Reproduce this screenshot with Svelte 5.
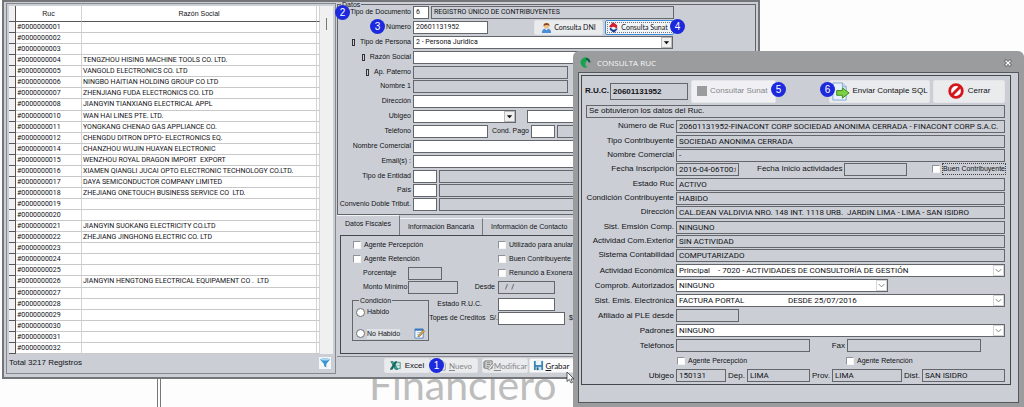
<script lang="ts">
	const providers = [
		['#0000000001', ''],
		['#0000000002', ''],
		['#0000000003', ''],
		['#0000000004', 'TENGZHOU HISING MACHINE TOOLS CO. LTD.'],
		['#0000000005', 'VANGOLD ELECTRONICS CO. LTD'],
		['#0000000006', 'NINGBO HAITIAN HOLDING GROUP CO LTD'],
		['#0000000007', 'ZHENJIANG FUDA ELECTRONICS CO. LTD'],
		['#0000000008', 'JIANGYIN TIANXIANG ELECTRICAL APPL'],
		['#0000000010', 'WAN HAI LINES PTE. LTD.'],
		['#0000000011', 'YONGKANG CHENAO GAS APPLIANCE CO.'],
		['#0000000012', 'CHENGDU DITRON DPTO- ELECTRONICS EQ.'],
		['#0000000014', 'CHANZHOU WUJIN HUAYAN ELECTRONIC'],
		['#0000000015', 'WENZHOU ROYAL DRAGON IMPORT  EXPORT'],
		['#0000000016', 'XIAMEN QIANGLI JUCAI OPTO ELECTRONIC TECHNOLOGY CO.LTD.'],
		['#0000000017', 'DAYA SEMICONDUCTOR COMPANY LIMITED'],
		['#0000000018', 'ZHEJIANG ONETOUCH BUSINESS SERVICE CO  LTD.'],
		['#0000000019', ''],
		['#0000000020', ''],
		['#0000000021', 'JIANGYIN SUOKANG ELECTRICITY CO.LTD'],
		['#0000000022', 'ZHEJIANG JINGHONG ELECTRIC CO. LTD'],
		['#0000000023', ''],
		['#0000000024', ''],
		['#0000000025', ''],
		['#0000000026', 'JIANGYIN HENGTONG ELECTRICAL EQUIPAMENT CO .  LTD'],
		['#0000000027', ''],
		['#0000000028', ''],
		['#0000000029', ''],
		['#0000000030', ''],
		['#0000000031', ''],
		['#0000000032', '']
	];

	const steps = [
		{ n: 1, x: 429, y: 358 },
		{ n: 2, x: 335, y: 5 },
		{ n: 3, x: 370, y: 19 },
		{ n: 4, x: 670, y: 19 },
		{ n: 5, x: 771, y: 82 },
		{ n: 6, x: 820, y: 82 }
	];

	// option text collapses plain spaces
	const nb = '\u00a0';
	const activity = `Principal${nb.repeat(4)}- 7020 - ACTIVIDADES DE CONSULTORÍA DE GESTIÓN`;
	const emission = `FACTURA PORTAL${nb.repeat(22)}DESDE 25/07/2016`;

	const tabs = ['Datos Fiscales', 'Información Bancaria', 'Información de Contacto'];
	let activeTab = $state(0);
	let condition = $state('');
</script>

{#snippet dropArrow()}
	<span class="drop"><svg viewBox="0 0 10 10"><path d="M2 3.5h6L5 7z" fill="#111" /></svg></span>
{/snippet}

{#snippet chevron()}
	<span class="drop light"><svg viewBox="0 0 10 10"><path d="M2 3.5l3 3 3-3" fill="none" stroke="#777" /></svg></span>
{/snippet}

{#snippet readonlyRow(id: string, label: string, value: string)}
	<div class="row">
		<label for={id}>{label}</label>
		<input {id} class="grow" readonly {value} />
	</div>
{/snippet}

{#snippet selectRow(id: string, label: string, value: string, short: boolean)}
	<div class="row tall">
		<label for={id}>{label}</label>
		<span class="select" class:grow={!short} class:w212={short}>
			<select {id}><option>{value}</option></select>
			{@render chevron()}
		</span>
	</div>
{/snippet}

<div class="desktop">
	<div class="backdrop"><span>Financiero</span></div>

	<main class="window">
		<section class="list">
			<div class="grid">
				<table>
					<thead>
						<tr><th class="sel"></th><th class="ruc">Ruc</th><th>Razón Social</th><th class="end"></th></tr>
					</thead>
					<tbody>
						{#each providers as [ruc, name]}
							<tr><td class="sel"></td><td>{ruc}</td><td>{name}</td><td></td></tr>
						{/each}
					</tbody>
				</table>
				<div class="scroll"><i></i></div>
			</div>
			<footer>
				<span>Total 3217 Registros</span>
				<button class="filter" aria-label="Filtrar">
					<svg viewBox="0 0 12 12">
						<path d="M1 2.5C1 1 11 1 11 2.5L7.300 7v3.500L5 9V7z" fill="#3b93cf" />
						<ellipse cx="6" cy="2.500" rx="4.200" ry="1" fill="#a9dbf5" />
					</svg>
				</button>
			</footer>
		</section>

		<section class="editor">
			<fieldset class="datos">
				<legend>Datos</legend>
				<div class="row">
					<label for="tdoc">Tipo de Documento</label>
					<input id="tdoc" class="w16" value="6" />
					<input class="ro w243" aria-label="Documento" readonly value="REGISTRO ÚNICO DE CONTRIBUYENTES" />
				</div>
				<div class="row">
					<label for="num">Número</label>
					<input id="num" class="w75" value="20601131952" />
					<button class="btn dni">
						<svg viewBox="0 0 12 12">
							<path d="M1 12c0-4 2-5 5-5s5 1 5 5z" fill="#4a8fd8" />
							<path d="M4 7l2 2 2-2z" fill="#fff" />
							<circle cx="6" cy="4.200" r="3" fill="#f3c08c" />
							<path d="M2.800 4.500C2 0 10 0 9.200 4.500 8 3 5 3 2.800 4.500z" fill="#8a4a1c" />
						</svg>
						Consulta DNI
					</button>
					<button class="btn sunat">
						<svg viewBox="0 0 12 12">
							<path d="M5.500 0L10 3.500v3L8.500 7.500C8.500 5 5.500 4.500 3.500 6L1 5z" fill="#d3202e" />
							<path d="M6.500 12L2 8.500v-2L3.500 6C3.500 8.500 6.500 9 8.500 7.500L11 7z" fill="#1d3f94" />
						</svg>
						Consulta Sunat
					</button>
				</div>
				<div class="row">
					<label for="tper"><i class="mark"></i>Tipo de Persona</label>
					<span class="select w260">
						<select id="tper"><option>2 - Persona Juridica</option></select>
						{@render dropArrow()}
					</span>
				</div>
				<div class="row">
					<label for="razon"><i class="mark"></i>Razón Social</label>
					<input id="razon" class="grow" />
				</div>
				<div class="row">
					<label for="pat"><i class="mark"></i>Ap. Paterno</label>
					<input id="pat" class="ro w155" readonly />
				</div>
				<div class="row tight">
					<label for="nom1">Nombre 1</label>
					<input id="nom1" class="ro w155" readonly />
				</div>
				<div class="row">
					<label for="dir">Dirección</label>
					<input id="dir" class="grow" />
				</div>
				<div class="row">
					<label for="ubi">Ubigeo</label>
					<span class="select w103">
						<select id="ubi"><option></option></select>
						{@render dropArrow()}
					</span>
					<input class="grow after" aria-label="Distrito" />
				</div>
				<div class="row">
					<label for="tel">Teléfono</label>
					<input id="tel" class="w75" />
					<label class="inline" for="pago">Cond. Pago</label>
					<input id="pago" class="w24" />
					<input class="ro grow" aria-label="Condición" readonly />
				</div>
				<div class="row">
					<label for="ncom">Nombre Comercial</label>
					<input id="ncom" class="grow" />
				</div>
				<div class="row">
					<label for="mail">Email(s) :</label>
					<input id="mail" class="grow" />
				</div>
				<div class="row">
					<label for="ent">Tipo de Entidad</label>
					<input id="ent" class="w24" />
					<input class="ro grow" aria-label="Entidad" readonly />
				</div>
				<div class="row tight">
					<label for="pais">País</label>
					<input id="pais" class="w24" />
					<input class="ro grow" aria-label="Nombre de país" readonly />
				</div>
				<div class="row tight">
					<label for="conv">Convenio Doble Tribut.</label>
					<input id="conv" class="w24" />
					<input class="ro grow" aria-label="Convenio" readonly />
				</div>
			</fieldset>

			<div class="tabs" role="tablist">
				{#each tabs as tab, i}
					<button role="tab" aria-selected={activeTab === i} class:active={activeTab === i} onclick={() => (activeTab = i)}>{tab}</button>
				{/each}
			</div>

			<div class="panel">
				<div class="pair">
					<label class="check"><input type="checkbox" />Agente Percepción</label>
					<label class="check"><input type="checkbox" />Utilizado para anular</label>
				</div>
				<div class="pair">
					<label class="check"><input type="checkbox" />Agente Retención</label>
					<label class="check"><input type="checkbox" />Buen Contribuyente</label>
				</div>
				<div class="pair">
					<div class="amount">
						<label for="porc">Porcentaje</label>
						<input id="porc" class="ro w34" readonly />
					</div>
					<label class="check"><input type="checkbox" />Renunció a Exonera</label>
				</div>
				<div class="pair">
					<div class="amount">
						<label for="monto">Monto Mínimo</label>
						<input id="monto" class="ro w50" readonly />
						<label class="since" for="desde">Desde</label>
					</div>
					<input id="desde" class="ro w57 date" readonly value="/  /" />
				</div>
				<div class="bottom">
					<fieldset class="condition">
						<legend>Condición</legend>
						<label><input type="radio" value="habido" bind:group={condition} />Habido</label>
						<div class="split">
							<label><input type="radio" value="no" bind:group={condition} /><span class="hl">No Habido</span></label>
							<svg viewBox="0 0 12 12">
								<path d="M1 1h9v10H1z" fill="#fff" stroke="#4b86c6" />
								<path d="M1 1h9v2H1z" fill="#3c78bd" />
								<path d="M3 5h5M3 7h5M3 9h3" stroke="#9dbde0" />
								<path d="M5 8l5-6 1.500 1.500L6.500 9 4.500 9.500z" fill="#e3a93b" stroke="#6a4a18" stroke-width=".5" />
							</svg>
						</div>
					</fieldset>
					<div class="credit">
						<div><label class="ruc-state" for="est">Estado R.U.C.</label><input id="est" class="w57" /></div>
						<div><label for="tope">Topes de Creditos&nbsp; S/.</label><input id="tope" class="w67" /><span>$</span></div>
					</div>
				</div>
			</div>

			<div class="actions">
				<button class="btn excel">
					<svg viewBox="0 0 14 12">
						<path d="M6 2h7v8H6z" fill="#fff" stroke="#2a8a7a" />
						<path d="M7 4h6M7 6h6M7 8h6" stroke="#2a8a7a" stroke-width=".6" />
						<path d="M1 1h3l6 10H7z" fill="#1fb7a6" stroke="#0c3d38" stroke-width=".6" />
						<path d="M9 1H6.500L0 11h3z" fill="#16695f" stroke="#0c3d38" stroke-width=".4" />
					</svg>
					Excel
				</button>
				<button class="btn new" disabled>
					<svg viewBox="0 0 12 12"><path d="M2 1h5l3 3v7H2z" fill="#fff" stroke="#8a8a8a" /></svg>
					<span><u>N</u>uevo</span>
				</button>
				<button class="btn modify" disabled>
					<svg viewBox="0 0 12 12">
						<path d="M2 1h8v8H2z" fill="#ddd" stroke="#777" />
						<path d="M1 2v7M4 3h4M4 5h4M4 7h2" stroke="#777" />
						<path d="M5 10l5-6 1.500 1.500L7 11z" fill="#eee" stroke="#777" stroke-width=".7" />
					</svg>
					<span><u>M</u>odificar</span>
				</button>
				<button class="btn save">
					<svg viewBox="0 0 12 12">
						<path d="M1 1h10v10H1z" fill="#3f86b8" />
						<path d="M3 1h6v4.500H3z" fill="#eaf4fa" />
						<path d="M3 7.500h6V11H3z" fill="#cfe3ef" />
						<path d="M4 8h2v3H4z" fill="#2a5c80" />
					</svg>
					<span><u>G</u>rabar</span>
				</button>
			</div>
		</section>
	</main>

	<section class="dialog" role="dialog" aria-label="CONSULTA RUC">
		<header>
			<svg class="logo" viewBox="0 0 12 12">
				<path d="M10 2A5.500 5.500 0 1 0 8.500 11C4.500 10.500 5 5 10 2z" fill="#16a34f" />
				<path d="M7 1.200c3 .3 4.600 2.600 4.400 5L9 5.500C9 4 8 3 6 3z" fill="#0d5b45" />
			</svg>
			<h2>CONSULTA RUC</h2>
			<button class="close" aria-label="Cerrar ventana">
				<svg viewBox="0 0 8 8">
					<path d="M1 1l6 6M7 1L1 7" stroke="#55585b" stroke-width="2.600" />
					<path d="M1.500 1.500l5 5M6.500 1.500l-5 5" stroke="#fff" stroke-width="1.400" />
				</svg>
			</button>
		</header>
		<div class="frame">
			<div class="sheet">
				<div class="top">
					<label for="ruc">R.U.C.</label>
					<input id="ruc" class="w78" readonly value="20601131952" />
					<button class="btn query" disabled><i></i>Consultar Sunat</button>
					<button class="btn send">
						<svg viewBox="0 0 20 20">
							<path d="M2 1h10l4 4v14H2z" fill="#e8f2fb" stroke="#7fa9d3" />
							<path d="M12 1v4h4" fill="#c3dbf0" stroke="#7fa9d3" />
							<path d="M6 9h6V6l7 5.500-7 5.500v-3H6z" fill="#7cd043" stroke="#3b8a1c" />
						</svg>
						Enviar Contaple SQL
					</button>
					<button class="btn exit">
						<svg viewBox="0 0 16 16">
							<circle cx="8" cy="8" r="6.300" fill="#fff" stroke="#d4151b" stroke-width="2.800" />
							<path d="M12 4l-8 8" stroke="#d4151b" stroke-width="2.800" />
						</svg>
						Cerrar
					</button>
				</div>
				<p class="status">Se obtuvieron los datos del Ruc.</p>
				{@render readonlyRow('d-num', 'Número de Ruc', '20601131952-FINACONT CORP SOCIEDAD ANONIMA CERRADA - FINACONT CORP S.A.C.')}
				{@render readonlyRow('d-tipo', 'Tipo Contribuyente', 'SOCIEDAD ANONIMA CERRADA')}
				{@render readonlyRow('d-nom', 'Nombre Comercial', '-')}
				<div class="row">
					<label for="d-ins">Fecha Inscripción</label>
					<input id="d-ins" class="w63" readonly value="2016-04-06T00:00" />
					<label class="mid" for="d-ini">Fecha Inicio actividades</label>
					<input id="d-ini" class="w63" readonly />
					<label class="check focus"><input type="checkbox" /><span>Buen Contribuyente</span></label>
				</div>
				{@render readonlyRow('d-est', 'Estado Ruc', 'ACTIVO')}
				{@render readonlyRow('d-con', 'Condición Contribuyente', 'HABIDO')}
				{@render readonlyRow('d-dir', 'Dirección', 'CAL.DEAN VALDIVIA NRO. 148 INT. 1118 URB.  JARDIN LIMA - LIMA - SAN ISIDRO')}
				{@render readonlyRow('d-emi', 'Sist. Emsión Comp.', 'NINGUNO')}
				{@render readonlyRow('d-ext', 'Actividad Com.Exterior', 'SIN ACTIVIDAD')}
				{@render readonlyRow('d-sis', 'Sistema Contabilidad', 'COMPUTARIZADO')}
				{@render selectRow('d-eco', 'Actividad Económica', activity, false)}
				{@render selectRow('d-com', 'Comprob. Autorizados', 'NINGUNO', true)}
				{@render selectRow('d-ele', 'Sist. Emis. Electrónica', emission, false)}
				<div class="row tall">
					<label for="d-ple">Afiliado al PLE desde</label>
					<input id="d-ple" class="w63" readonly />
				</div>
				{@render selectRow('d-pad', 'Padrones', 'NINGUNO', false)}
				<div class="row tall">
					<label for="d-tel">Teléfonos</label>
					<input id="d-tel" class="w134" readonly />
					<label class="fax" for="d-fax">Fax</label>
					<input id="d-fax" class="w134" readonly />
				</div>
				<div class="row tall agents">
					<label class="check"><input type="checkbox" />Agente Percepción</label>
					<label class="check"><input type="checkbox" />Agente Retención</label>
				</div>
				<div class="row tall place">
					<label for="d-ubi">Ubigeo</label>
					<input id="d-ubi" class="w50" readonly value="150131" />
					<label for="d-dep">Dep.</label>
					<input id="d-dep" class="w63" readonly value="LIMA" />
					<label for="d-pro">Prov.</label>
					<input id="d-pro" class="w70" readonly value="LIMA" />
					<label for="d-dis">Dist.</label>
					<input id="d-dis" class="grow" readonly value="SAN ISIDRO" />
				</div>
			</div>
		</div>
	</section>

	{#each steps as s}
		<b class="step" style="left: {s.x}px; top: {s.y}px">{s.n}</b>
	{/each}
	<svg class="cursor" viewBox="0 0 9 13">
		<path d="M1 1v9.500l2.300-2L5 12l1.500-.700L5 8h3z" fill="#fff" stroke="#333" stroke-width=".8" />
	</svg>
</div>

<style>
	:global(body) {
		background: #fdfdfd;
	}

	.desktop {
		position: relative;
		display: grid;
		grid-template-columns: 573fr 187fr 264fr;
		align-items: start;
		overflow: hidden;
		font-family: 'Liberation Sans', Arial, sans-serif;
		font-size: 7px;
		line-height: 10px;
		color: #111116;
	}

	input,
	select,
	button {
		box-sizing: border-box;
		min-width: 0;
		margin: 0;
		font: inherit;
		color: inherit;
	}

	input,
	select,
	td {
		font-family: Roboto, Arial, sans-serif;
	}

	fieldset {
		min-width: 0;
		margin: 0;
		padding: 0;
		border: 1px solid #63676b;
	}

	legend {
		height: 1px;
		margin-left: 3px;
		padding: 0 1px;
		line-height: 1px;
	}

	svg {
		display: block;
		flex: none;
	}

	label {
		white-space: nowrap;
	}

	.backdrop {
		grid-area: 1 / 1 / 2 / 2;
		align-self: end;
		height: 40px;
		margin-left: 157px;
		padding-left: 208px;
		border-left: 4px double #777;
		font-family: Lato, sans-serif;
		font-size: 41px;
		line-height: 36px;
		color: #bdbdbd;
	}

	.window {
		grid-area: 1 / 1 / 2 / 3;
		display: grid;
		grid-template-columns: 330px 1fr;
		gap: 1px;
		margin-left: 2px;
		padding: 1px 1px 3px 2px;
		border: 2px solid #737578;
		background: #cbcfd5;
	}

	.list {
		display: flex;
		flex-direction: column;
		padding: 2px;
		border: 1px solid #85888c;
	}

	.grid {
		flex: 1;
		display: grid;
		grid-template-columns: 1fr 13px;
		background: #fff;
	}

	table {
		width: 100%;
		table-layout: fixed;
		border-collapse: separate;
		border-spacing: 0;
	}

	th,
	td {
		padding: 0;
		border-right: 1px solid #d4d4d4;
		border-bottom: 1px solid #c9c9c9;
		overflow: hidden;
		text-align: left;
		white-space: pre;
	}

	td {
		padding-left: 1px;
	}

	th {
		height: 15px;
		border-bottom-color: #555;
		font-weight: normal;
		text-align: center;
	}

	.sel {
		width: 6px;
		border-right-color: #555;
		border-bottom-color: #555;
		background: #f0f0f0;
	}

	.ruc {
		width: 65px;
	}

	.end {
		width: 2px;
	}

	.scroll {
		display: flex;
		justify-content: center;
		align-items: flex-start;
		padding-top: 12px;
		background: #f0f0f0;
	}

	.scroll i {
		width: 1px;
		height: 12px;
		background: #777;
	}

	.list footer {
		display: flex;
		align-items: center;
		justify-content: space-between;
		height: 17px;
		padding-right: 2px;
		font-size: 8px;
	}

	.filter {
		width: 12px;
		height: 12px;
		padding: 0;
		border: 0;
		background: #f4f6f8;
	}

	.editor {
		display: flex;
		flex-direction: column;
		min-width: 0;
	}

	.datos {
		margin: 1px 1px 0 0;
		padding-bottom: 3px;
	}

	.row {
		display: flex;
		align-items: center;
		gap: 2px;
		height: 14px;
	}

	.datos .row {
		margin-bottom: 1px;
	}

	.datos .row:has(+ .tight),
	.datos .row:last-child {
		margin-bottom: 0;
	}

	.datos .row > label:first-child {
		display: flex;
		align-items: center;
		justify-content: flex-end;
		gap: 5px;
		width: 73px;
	}

	.mark {
		box-sizing: border-box;
		width: 3px;
		height: 7px;
		border: 1px solid #333;
	}

	.row > input,
	.select,
	.w34,
	.w50,
	.w57,
	.w67 {
		height: 13px;
		padding: 0 2px;
		border: 1px solid #63676b;
		border-radius: 0;
		background: #fff;
		outline: 0;
	}

	.row > .ro,
	.panel .ro,
	.dialog .row > input {
		background: #cbcfd5;
	}

	.select {
		box-sizing: border-box;
		display: flex;
		align-items: stretch;
		padding: 0;
	}

	select {
		flex: 1;
		padding: 0 2px;
		border: 0;
		background: none;
		appearance: none;
	}

	.drop {
		display: flex;
		align-items: center;
		box-sizing: border-box;
		width: 11px;
		border: 1px solid #bbb;
		background: #f0f0f0;
		pointer-events: none;
	}

	.drop.light {
		border-color: #d5d5d5;
		background: #fff;
	}

	.grow {
		flex: 1;
	}

	.w16 {
		width: 16px;
	}

	.w24 {
		width: 24px;
	}

	.w34 {
		width: 34px;
	}

	.w50 {
		width: 50px;
	}

	.w57 {
		width: 57px;
	}

	.w63 {
		width: 63px;
	}

	.w67 {
		width: 67px;
	}

	.w70 {
		width: 70px;
	}

	.w75 {
		width: 75px;
	}

	.w78 {
		width: 78px;
	}

	.w103 {
		width: 103px;
	}

	.w134 {
		width: 134px;
	}

	.w155 {
		width: 155px;
	}

	.w212 {
		width: 212px;
	}

	.w243 {
		width: 243px;
	}

	.w260 {
		width: 260px;
	}

	.after {
		margin-left: 9px;
	}

	.inline {
		margin-left: 2px;
	}

	.btn {
		display: flex;
		align-items: center;
		justify-content: center;
		gap: 2px;
		height: 15px;
		padding: 0 2px;
		border: 1px solid #e3e5e8;
		border-radius: 2px;
		background: #e9ebed;
		white-space: nowrap;
	}

	.btn:disabled {
		color: #85878a;
	}

	.btn svg {
		width: 11px;
		height: 11px;
	}

	.dni,
	.sunat {
		width: 69px;
		font-family: Lato, sans-serif;
	}

	.dni {
		margin-left: 44px;
	}

	.sunat {
		padding-right: 5px;
		border-color: #3a8ddb;
		background: #f2f5f8;
		outline: 1px dotted #777;
		outline-offset: -3px;
	}

	.tabs {
		display: flex;
		align-items: flex-end;
		height: 20px;
	}

	.tabs button {
		height: 17px;
		padding: 0 8px;
		border: 0;
		border-top: 1px solid #f1f3f5;
		border-right: 1px solid #75797d;
		background: none;
		white-space: nowrap;
	}

	.tabs .active {
		height: 20px;
		padding-bottom: 3px;
	}

	.panel {
		height: 115px;
		margin: 0 2px 2px 3px;
		padding-top: 2px;
		border: 1px solid #45484b;
	}

	.pair {
		display: grid;
		grid-template-columns: 145px 1fr;
		align-items: center;
		height: 14px;
		padding-left: 12px;
	}

	.check {
		display: flex;
		align-items: center;
		gap: 3px;
	}

	input[type='checkbox'] {
		width: 8px;
		height: 8px;
		border: 1px solid #8f9397;
		border-right-color: #f5f5f5;
		border-bottom-color: #f5f5f5;
		background: #fff;
		appearance: none;
	}

	input[type='radio'] {
		width: 9px;
		height: 9px;
		border: 1px solid #6b6e71;
		border-radius: 50%;
		background: #fff;
		appearance: none;
	}

	.amount {
		display: flex;
		align-items: center;
		padding-left: 10px;
	}

	.amount label:first-child {
		width: 45px;
	}

	.since {
		margin-left: auto;
		padding-right: 3px;
	}

	.panel .date {
		padding-left: 6px;
	}

	.bottom {
		display: flex;
		align-items: flex-start;
		padding: 3px 0 0 11px;
	}

	.condition {
		display: flex;
		flex-direction: column;
		gap: 11px;
		box-sizing: border-box;
		width: 77px;
		margin-top: 3px;
		padding: 6px 3px 1px;
	}

	.condition label,
	.split {
		display: flex;
		align-items: center;
		gap: 2px;
	}

	.split {
		justify-content: space-between;
	}

	.split svg {
		width: 11px;
		height: 11px;
	}

	.hl {
		background: #dfe2e5;
	}

	.credit div {
		display: flex;
		align-items: center;
		height: 14px;
	}

	.credit label {
		box-sizing: border-box;
		width: 69px;
		text-align: right;
	}

	.credit .ruc-state {
		padding-right: 16px;
	}

	.credit span {
		margin-left: 4px;
	}

	.actions {
		display: flex;
		align-items: center;
		height: 17px;
		padding-left: 47px;
		border-top: 1px solid #85888c;
	}

	.actions .btn {
		font-family: Lato, sans-serif;
		font-size: 8px;
	}

	.actions .excel {
		width: 46px;
		gap: 4px;
		font-family: 'Liberation Sans', Arial, sans-serif;
	}

	.new {
		width: 48px;
		margin-right: 4px;
	}

	.actions .modify {
		width: 46px;
		gap: 0;
		margin-right: 1px;
	}

	.actions .save {
		width: 48px;
		padding-right: 6px;
		background: #fafafa;
	}

	.dialog {
		grid-area: 1 / 2 / 2 / 4;
		position: relative;
		margin-top: 51px;
		padding: 0 5px 4px;
		border-radius: 6px 6px 0 0;
		background: #9b9c9d;
		font-size: 8px;
	}

	.dialog header {
		display: flex;
		align-items: center;
		gap: 6px;
		height: 21px;
		padding: 2px 7px 0 2px;
		box-sizing: border-box;
	}

	.logo {
		width: 11px;
		height: 11px;
	}

	h2 {
		flex: 1;
		margin: 0;
		font-family: 'Open Sans', sans-serif;
		font-size: 8px;
		font-weight: normal;
		color: #f8f8f8;
	}

	.close {
		width: 8px;
		height: 8px;
		padding: 0;
		border: 0;
		background: none;
	}

	.close svg {
		width: 8px;
		height: 8px;
	}

	.frame {
		padding: 2px 7px 17px 2px;
		border: 1px solid #55585b;
		background: #cbcfd5;
	}

	.sheet {
		padding: 3px 5px 1px 3px;
		border: 1px solid #45484b;
	}

	.top {
		display: flex;
		align-items: center;
		height: 24px;
		gap: 3px;
	}

	.top label {
		width: 22px;
		font-weight: bold;
	}

	.top input {
		height: 17px;
		padding: 0 2px;
		border: 1px solid #63676b;
		background: #cbcfd5;
		font-family: 'Liberation Sans', Arial, sans-serif;
		font-weight: bold;
	}

	.top .btn {
		height: 23px;
	}

	.query {
		width: 85px;
		justify-content: flex-start;
		padding-left: 5px;
		background: #f0f0f4;
	}

	.query i {
		width: 10px;
		height: 10px;
		margin-right: 1px;
		background: #9b9c9d;
	}

	.send {
		width: 101px;
		margin-left: auto;
	}

	.send svg {
		width: 19px;
		height: 19px;
	}

	.top .exit {
		width: 72px;
		gap: 4px;
	}

	.exit svg {
		width: 16px;
		height: 16px;
	}

	.status {
		height: 11px;
		margin: 2px 0 1px 1px;
		padding-left: 2px;
		border: 1px solid #63676b;
	}

	.dialog .row > label:first-child:not(.check) {
		width: 89px;
		text-align: right;
	}

	.dialog .row:nth-child(3n) {
		margin-bottom: 1px;
	}

	.dialog .tall {
		height: 15px;
	}

	.dialog .row:nth-child(3n).tall {
		margin-bottom: 0;
	}

	.mid {
		margin-left: 16px;
	}

	.focus {
		margin-left: auto;
		font-size: 7px;
	}

	.focus span {
		outline: 1px dotted #444;
	}

	.fax {
		width: 33px;
		text-align: right;
	}

	.agents {
		display: grid;
		grid-template-columns: 169px 1fr;
		gap: 0;
		padding-left: 92px;
		font-size: 7px;
	}

	.step {
		position: absolute;
		width: 15px;
		height: 15px;
		border-radius: 50%;
		background: #1d29dc;
		font-size: 10px;
		font-weight: normal;
		line-height: 15px;
		text-align: center;
		color: #fff;
	}

	.cursor {
		position: absolute;
		top: 371px;
		left: 566px;
		width: 9px;
		height: 13px;
	}
</style>
